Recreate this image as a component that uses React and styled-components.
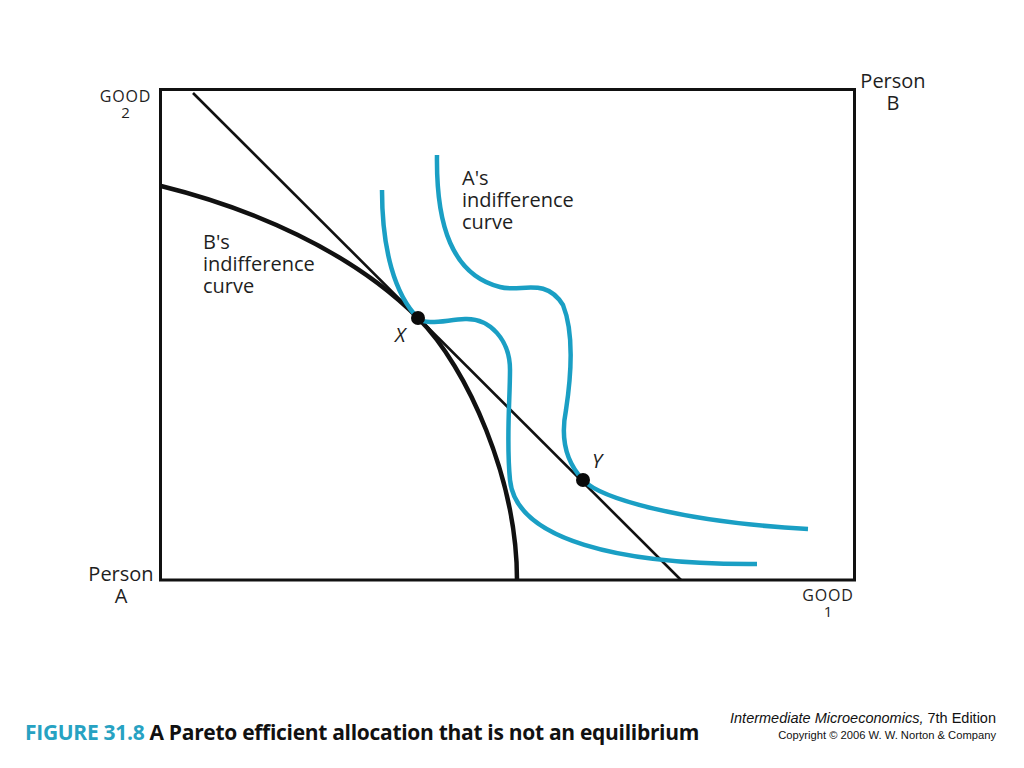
import React from "react";
import styled, { createGlobalStyle } from "styled-components";

const Global = createGlobalStyle`
  html, body { margin: 0; padding: 0; background: #fff; }
  body { font-family: "Open Sans", "Liberation Sans", sans-serif; }
`;

const Page = styled.div`
  width: 1024px;
  height: 768px;
  background: #fff;
  display: flex;
  flex-direction: column;
  overflow: hidden;
`;

const Chart = styled.svg`
  display: block;
  width: 1024px;
  height: 695px;
  flex: none;
`;

const Label = styled.text`
  font-family: "Open Sans", "Liberation Sans", sans-serif;
  font-size: ${(p) => p.$size || 20}px;
  font-style: ${(p) => (p.$italic ? "italic" : "normal")};
  letter-spacing: ${(p) => p.$spacing || 0}px;
  text-anchor: ${(p) => p.$anchor || "start"};
  fill: #1e1e1e;
`;

const Frame = styled.rect`
  fill: none;
  stroke: #111;
  stroke-width: 3;
`;

const Curve = styled.path`
  fill: none;
  stroke: ${(p) => (p.$blue ? "#1a9fc4" : "#111")};
  stroke-width: ${(p) => p.$w || 4.5};
  stroke-linecap: butt;
`;

const Dot = styled.circle`
  fill: #0a0a0a;
`;

const Footer = styled.div`
  flex: 1;
  display: flex;
  justify-content: space-between;
  align-items: flex-start;
  padding: 14px 28px 0 25px;
`;

const Caption = styled.div`
  margin-top: 9px;
  font-family: "Open Sans", "Liberation Sans", sans-serif;
  font-weight: 700;
  font-size: 21px;
  letter-spacing: -0.3px;
  line-height: 28px;
  color: #111;
  white-space: nowrap;
`;

const Tag = styled.span`
  color: #27a2c2;
`;

const Credits = styled.div`
  flex: none;
  display: flex;
  flex-direction: column;
  align-items: flex-end;
  font-family: "Liberation Sans", Arial, sans-serif;
  color: #111;
  white-space: nowrap;
`;

const CreditLine = styled.div`
  font-size: ${(p) => p.$size}px;
  line-height: ${(p) => p.$lh}px;
`;

const Book = styled.span`
  font-style: italic;
`;

export default function App() {
  return (
    <Page>
      <Global />
      <Chart viewBox="0 0 1024 695">
        <Frame x="160.5" y="89.5" width="694" height="490.5" />
        <Curve d="M193 93 L681 580" $w={2.6} />
        <Curve d="M161 186 C250 208, 350 250, 418 318 C468 368, 517 480, 517 580" $w={4.5} />
        <Curve
          $blue
          d="M382 190 C382 250, 395 295, 418 318 C426 326, 445 320, 465 319 C490 318, 510 340, 510 370 C510 400, 506 440, 510 480 C516 540, 620 565, 757 564"
        />
        <Curve
          $blue
          d="M437 155 C436 225, 452 275, 500 287 C520 293, 545 276, 563 305 C573 330, 572 370, 566 410 C560 440, 566 462, 583 480 C600 498, 680 522, 808 529"
        />
        <Dot cx="418" cy="318" r="7" />
        <Dot cx="583" cy="480" r="7" />

        <Label x="125.5" y="102" $size={16} $spacing={0.8} $anchor="middle">GOOD</Label>
        <Label x="125.5" y="118" $size={15} $anchor="middle">2</Label>

        <Label x="893" y="88" $size={20} $anchor="middle">Person</Label>
        <Label x="893" y="110" $size={20} $anchor="middle">B</Label>

        <Label x="121" y="580.5" $size={20} $anchor="middle">Person</Label>
        <Label x="121" y="602.5" $size={20} $anchor="middle">A</Label>

        <Label x="828" y="600.5" $size={16} $spacing={0.8} $anchor="middle">GOOD</Label>
        <Label x="828" y="617" $size={15} $anchor="middle">1</Label>

        <Label x="203" y="249">B's</Label>
        <Label x="203" y="271">indifference</Label>
        <Label x="203" y="293">curve</Label>

        <Label x="462" y="185">A's</Label>
        <Label x="462" y="207">indifference</Label>
        <Label x="462" y="229">curve</Label>

        <Label x="395" y="342" $italic>X</Label>
        <Label x="592" y="468" $italic>Y</Label>
      </Chart>
      <Footer>
        <Caption>
          <Tag>FIGURE 31.8</Tag> A Pareto efficient allocation that is not an equilibrium
        </Caption>
        <Credits>
          <CreditLine $size={14.5} $lh={18}>
            <Book>Intermediate Microeconomics,</Book> 7th Edition
          </CreditLine>
          <CreditLine $size={11.2} $lh={17}>
            Copyright © 2006 W. W. Norton &amp; Company
          </CreditLine>
        </Credits>
      </Footer>
    </Page>
  );
}
